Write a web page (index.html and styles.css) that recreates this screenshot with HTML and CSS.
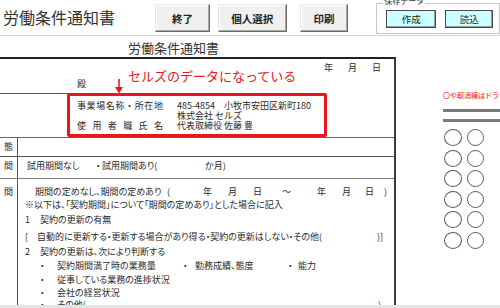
FILE: index.html
```html
<!DOCTYPE html>
<html lang="ja">
<head>
<meta charset="utf-8">
<title>労働条件通知書</title>
<link rel="stylesheet" href="styles.css">
</head>
<body>
<header class="toolbar">
  <h1 class="app-title">労働条件通知書</h1>
  <button class="btn btn-quit">終了</button>
  <button class="btn btn-select">個人選択</button>
  <button class="btn btn-print">印刷</button>
  <div class="group">
    <span class="group-label">保存データ</span>
    <button class="cbtn cbtn-make">作成</button>
    <button class="cbtn cbtn-load">読込</button>
  </div>
</header>
<main class="main">
  <section class="form">
    <div class="doc-title">労働条件通知書</div>
    <div class="sheet">
      <div class="date-row"><span>年</span><span>月</span><span>日</span></div>
      <div class="addressee">殿</div>
      <div class="employer">
        <div class="emp-label">事業場名称・所在地</div><div class="emp-value">485-4854　小牧市安田区新町180</div>
        <div class="emp-label"></div><div class="emp-value">株式会社 セルズ</div>
        <div class="emp-label">使用者職氏名</div><div class="emp-value">代表取締役 佐藤 豊</div>
      </div>
      <div class="row row-a"><div class="label">態</div><div class="content"></div></div>
      <div class="row row-b">
        <div class="label">間</div>
        <div class="content trial"><span>試用期間なし</span><span>・</span><span>試用期間あり(</span><span>か月)</span></div>
      </div>
      <div class="row row-c">
        <div class="label">間</div>
        <div class="content">
          <div class="line h12 period"><span>期間の定めなし、期間の定めあり</span><span>(</span><span>年</span><span>月</span><span>日</span><span>～</span><span>年</span><span>月</span><span>日</span><span>)</span></div>
          <div class="line h13 note">※以下は、「契約期間」について「期間の定めあり」とした場合に記入</div>
          <div class="line h18 numbered"><span>1</span><span>契約の更新の有無</span></div>
          <div class="line h15 renew"><span>[</span><span>自動的に更新する・更新する場合があり得る・契約の更新はしない・その他(</span><span>)]</span></div>
          <div class="line h15 numbered"><span>2</span><span>契約の更新は、次により判断する</span></div>
          <div class="line h14 criteria"><span>・</span><span>契約期間満了時の業務量</span><span>・</span><span>勤務成績、態度</span><span>・</span><span>能力</span></div>
          <div class="line h14 bullet"><span>・</span><span>従事している業務の進捗状況</span></div>
          <div class="line h12 bullet"><span>・</span><span>会社の経営状況</span></div>
          <div class="line h12 other"><span>・</span><span>その他(</span><span>)</span></div>
        </div>
      </div>
      <div class="callout-box"></div>
      <div class="callout-text">セルズのデータになっている</div>
      <svg class="callout-arrow" viewBox="0 0 10 15" width="10" height="15">
        <line x1="5" y1="0" x2="5" y2="9" stroke="#e8161e" stroke-width="1.6"/>
        <polygon points="1,8 9,8 5,14.5" fill="#e8161e"/>
      </svg>
    </div>
  </section>
  <aside class="side">
    <p class="side-note">〇や取消線はドラッグで移動できます</p>
    <div class="rule"></div>
    <div class="rule rule-2"></div>
    <div class="circles">
      <span class="ring"></span><span class="ring"></span>
      <span class="ring"></span><span class="ring"></span>
      <span class="ring"></span><span class="ring"></span>
      <span class="ring"></span><span class="ring"></span>
      <span class="ring"></span><span class="ring"></span>
      <span class="ring"></span><span class="ring"></span>
    </div>
  </aside>
</main>
<div class="hscroll"></div>
</body>
</html>
```
FILE: styles.css
```css
* { box-sizing: border-box; }
html, body { margin: 0; padding: 0; }
body {
  width: 500px;
  height: 308px;
  overflow: hidden;
  background: #fff;
  color: #2a2a2a;
  font-family: "Noto Sans CJK JP", "Noto Sans", sans-serif;
}

/* ---------- toolbar ---------- */
.toolbar {
  display: flex;
  align-items: flex-start;
  height: 36px;
  border-bottom: 1px solid #d4d4d4;
}
.app-title {
  margin: 0 0 0 3px;
  width: 154px;
  padding-top: 7px;
  font-size: 16px;
  line-height: 20px;
  font-weight: 400;
  color: #333;
  white-space: nowrap;
}
.btn {
  font-family: inherit;
  margin-top: 4px;
  height: 28px;
  padding: 0;
  font-size: 10.5px;
  font-weight: 700;
  color: #222;
  background: #f0f0f0;
  border: 1px solid;
  border-color: #e6e6e6 #6a6a6a #6a6a6a #e6e6e6;
  box-shadow: inset -1px -1px 0 #a8a8a8, inset 1px 1px 0 #fff;
}
.btn-quit { width: 55px; }
.btn-select { width: 70px; margin-left: 8px; }
.btn-print { width: 49px; margin-left: 13px; }

.group {
  position: relative;
  display: flex;
  gap: 9px;
  width: 125px;
  height: 31px;
  margin: 3px 0 0 28px;
  padding: 6px 0 0 9px;
  border: 1px solid #c8c8c8;
}
.group-label {
  position: absolute;
  top: -7px;
  left: 6px;
  padding: 0 1px;
  font-size: 8px;
  line-height: 8px;
  color: #333;
  background: #fff;
  white-space: nowrap;
}
.cbtn {
  font-family: inherit;
  height: 18px;
  padding: 0;
  font-size: 9.5px;
  color: #222;
  background: #ccffff;
  border: 1px solid #4a4a4a;
  box-shadow: inset -1px -1px 0 #8a9a9a;
}
.cbtn-make { width: 50px; }
.cbtn-load { width: 48px; }

/* ---------- main ---------- */
.main {
  display: flex;
  height: 269px;
  overflow: hidden;
}
.form {
  width: 396px;
  flex: none;
  display: flex;
  flex-direction: column;
}
.doc-title {
  flex: none;
  height: 21px;
  padding: 4px 0 0 128px;
  font-size: 13px;
  line-height: 16px;
  color: #333;
  white-space: nowrap;
}
.sheet {
  position: relative;
  flex: 1;
  border-top: 2px solid #222;
  border-right: 2px solid #3a3a3a;
  font-size: 9px;
  font-feature-settings: "palt" 1;
  white-space: nowrap;
}

.date-row {
  display: flex;
  justify-content: flex-end;
  gap: 15px;
  height: 18px;
  padding-right: 13px;
  line-height: 18px;
}
.date-row span { width: 9px; }

.addressee {
  width: 98px;
  height: 17px;
  padding-left: 77px;
  line-height: 14px;
  border-bottom: 1px solid #555;
}

.employer {
  display: grid;
  grid-template-columns: 86px auto;
  grid-auto-rows: 10px;
  column-gap: 14px;
  height: 44px;
  padding: 7px 0 0 77px;
  line-height: 10px;
  border-bottom: 1px solid #666;
  font-feature-settings: normal;
}
.emp-label {
  text-align: justify;
  text-align-last: justify;
  white-space: normal;
}

.row {
  display: flex;
  border-bottom: 1px solid #555;
}
.row-a { height: 19px; line-height: 18px; }
.row-b { height: 22px; border-bottom-color: #808080; }
.row-c { border-bottom: none; }
.label {
  flex: none;
  width: 18px;
  padding-left: 4px;
  border-right: 1px solid #555;
}
.content { flex: 1; }
.row-b .label,
.row-b .content { padding-top: 2px; line-height: 13px; }
.row-c .label,
.row-c .content { padding-top: 7px; }
.row-c .label { line-height: 12px; }

.trial {
  display: grid;
  grid-template-columns: 69px 6px 103px auto;
  padding-left: 9px;
}

.line { display: grid; }
.h12 { height: 12px; line-height: 12px; }
.h13 { height: 13px; line-height: 13px; }
.h14 { height: 14px; line-height: 14px; }
.h15 { height: 15px; line-height: 15px; }
.h18 { height: 18px; line-height: 18px; }

.period {
  grid-template-columns: 132px 36px 25px 25px 29px 35px 25px 23px 19px auto;
  padding-left: 17px;
}
.note { display: block; padding-left: 7px; }
.numbered { grid-template-columns: 15px auto; padding-left: 7px; }
.renew { grid-template-columns: 12px 340px auto; padding-left: 7px; }
.criteria { grid-template-columns: 17px 126px 12px 93px 10px auto; padding-left: 22px; }
.bullet { grid-template-columns: 17px auto; padding-left: 22px; }
.other { grid-template-columns: 17px 321px auto; padding-left: 22px; }

/* ---------- callout overlay ---------- */
.callout-box {
  position: absolute;
  left: 67px;
  top: 34px;
  width: 260px;
  height: 44px;
  border: 3px solid #e8161e;
  border-radius: 2px;
}
.callout-text {
  position: absolute;
  left: 128px;
  top: 9px;
  font-size: 13px;
  line-height: 16px;
  color: #e8161e;
  font-feature-settings: normal;
}
.callout-arrow {
  position: absolute;
  left: 114px;
  top: 20px;
}

/* ---------- side ---------- */
.side {
  flex: 1;
  padding: 54px 0 0 47px;
  overflow: hidden;
}
.side-note {
  margin: 0;
  font-size: 7px;
  line-height: 10px;
  color: #f00;
  white-space: nowrap;
}
.rule {
  height: 3px;
  margin-top: 9px;
  background: #7a7a7a;
}
.rule-2 { margin-top: 7px; }
.circles {
  display: grid;
  grid-template-columns: 18px 17px;
  grid-auto-rows: 17px;
  column-gap: 5px;
  row-gap: 3.6px;
  margin: 7px 0 0 1px;
}
.ring {
  border: 1px solid #5a5a5a;
  border-radius: 50%;
}

.hscroll {
  height: 3px;
  background: #e4e4e4;
}
```
